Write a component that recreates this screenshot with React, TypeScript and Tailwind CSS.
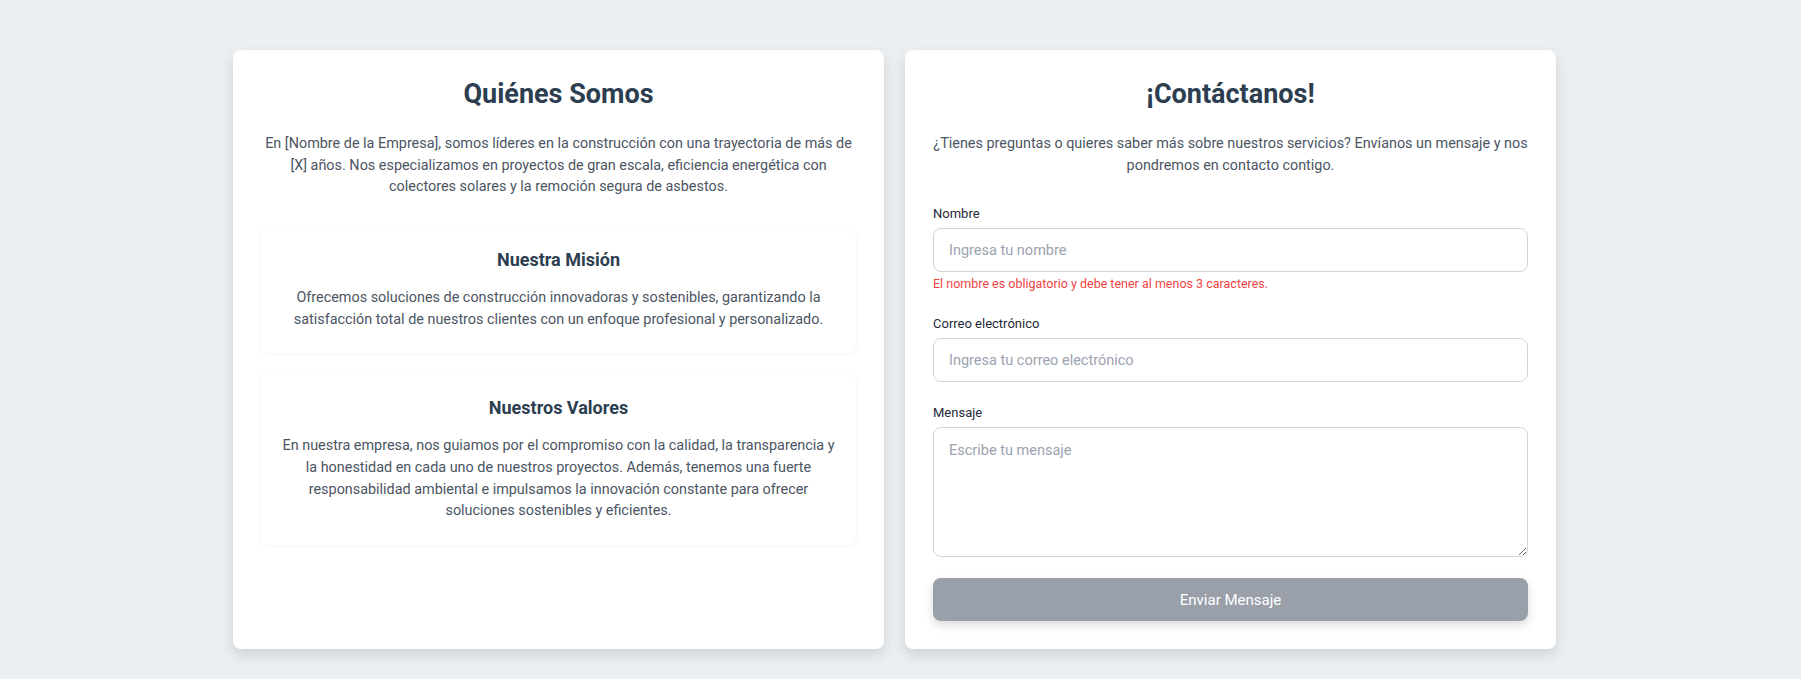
export default function App() {
  return (
    <div className="min-h-screen bg-[#ebeff1] pt-[50px] pb-8 pl-[233px] font-['Roboto',sans-serif]">
      <div className="grid w-[1323px] grid-cols-2 gap-[21px]">
        {/* About */}
        <section className="rounded-lg bg-white p-7 shadow-[0_6px_14px_rgba(0,0,0,0.12)]">
          <h2 className="text-center text-[27px] font-bold leading-[1.25] text-[#2c3e50]">Quiénes Somos</h2>
          <p className="mt-[21px] text-center text-[14.4px] leading-[21.8px] text-[#4b5563]">
            En [Nombre de la Empresa], somos líderes en la construcción con una trayectoria de más de
            [X] años. Nos especializamos en proyectos de gran escala, eficiencia energética con
            colectores solares y la remoción segura de asbestos.
          </p>

          <div className="mt-[31px] space-y-5">
            <div className="rounded-lg bg-white px-5 pt-5 pb-[23px] shadow-[0_1px_4px_rgba(0,0,0,0.05)]">
              <h3 className="text-center text-[18px] font-bold leading-[1.2] text-[#2c3e50]">Nuestra Misión</h3>
              <p className="mt-4 text-center text-[14.4px] leading-[21.8px] text-[#4b5563]">
                Ofrecemos soluciones de construcción innovadoras y sostenibles, garantizando la
                satisfacción total de nuestros clientes con un enfoque profesional y personalizado.
              </p>
            </div>
            <div className="rounded-lg bg-white px-5 pt-6 pb-[23px] shadow-[0_1px_4px_rgba(0,0,0,0.05)]">
              <h3 className="text-center text-[18px] font-bold leading-[1.2] text-[#2c3e50]">Nuestros Valores</h3>
              <p className="mt-4 text-center text-[14.4px] leading-[21.8px] text-[#4b5563]">
                En nuestra empresa, nos guiamos por el compromiso con la calidad, la transparencia y
                la honestidad en cada uno de nuestros proyectos. Además, tenemos una fuerte
                responsabilidad ambiental e impulsamos la innovación constante para ofrecer
                soluciones sostenibles y eficientes.
              </p>
            </div>
          </div>
        </section>

        {/* Contact */}
        <section className="rounded-lg bg-white p-7 shadow-[0_6px_14px_rgba(0,0,0,0.12)]">
          <h2 className="text-center text-[27px] font-bold leading-[1.25] text-[#2c3e50]">¡Contáctanos!</h2>
          <p className="mt-[21px] text-center text-[14.4px] leading-[21.8px] text-[#4b5563]">
            ¿Tienes preguntas o quieres saber más sobre nuestros servicios? Envíanos un mensaje y nos
            pondremos en contacto contigo.
          </p>

          <form className="mt-7" onSubmit={(e) => e.preventDefault()}>
            <div className="mb-[22px]">
              <label className="mb-1 block text-[13px] leading-5 text-[#1f2937]">Nombre</label>
              <input
                type="text"
                placeholder="Ingresa tu nombre"
                className="h-11 w-full rounded-lg border border-[#d1d5db] px-[15px] text-[14.5px] text-[#1f2937] placeholder:text-[#9ca3af] focus:outline-none"
              />
              <p className="mt-1 text-[12.5px] leading-4 text-[#ef4444]">
                El nombre es obligatorio y debe tener al menos 3 caracteres.
              </p>
            </div>

            <div className="mb-[21px]">
              <label className="mb-1 block text-[13px] leading-5 text-[#1f2937]">Correo electrónico</label>
              <input
                type="email"
                placeholder="Ingresa tu correo electrónico"
                className="h-11 w-full rounded-lg border border-[#d1d5db] px-[15px] text-[14.5px] text-[#1f2937] placeholder:text-[#9ca3af] focus:outline-none"
              />
            </div>

            <div className="mb-[21px]">
              <label className="mb-1 block text-[13px] leading-5 text-[#1f2937]">Mensaje</label>
              <textarea
                placeholder="Escribe tu mensaje"
                className="block h-[130px] w-full rounded-lg border border-[#d1d5db] px-[15px] py-3 text-[14.5px] text-[#1f2937] placeholder:text-[#9ca3af] focus:outline-none"
              />
            </div>

            <button
              type="submit"
              className="h-[43px] w-full rounded-lg bg-[#99a0a9] text-[15px] text-white shadow-[0_4px_10px_rgba(0,0,0,0.15)]"
            >
              Enviar Mensaje
            </button>
          </form>
        </section>
      </div>
    </div>
  );
}
